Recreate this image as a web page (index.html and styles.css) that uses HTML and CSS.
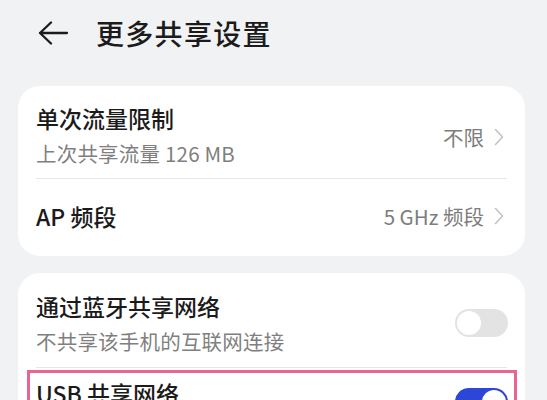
FILE: index.html
```html
<!DOCTYPE html>
<html lang="zh-CN">
<head>
<meta charset="utf-8">
<link rel="stylesheet" href="styles.css">
</head>
<body>
<div class="page">
  <header class="header">
    <svg class="back" width="32" height="24" viewBox="0 0 32 24">
      <path d="M30 12H3M14 1.5L3 12L14 22.5" fill="none" stroke="#1b1b1b" stroke-width="2.3" stroke-linecap="round" stroke-linejoin="round"/>
    </svg>
    <h1 class="title">更多共享设置</h1>
  </header>

  <section class="card">
    <div class="row row-two">
      <div class="texts">
        <div class="label">单次流量限制</div>
        <div class="sub">上次共享流量 126 MB</div>
      </div>
      <div class="value value-low">不限<svg class="chev" width="12" height="18" viewBox="0 0 12 18"><path d="M2.5 1.5L9.5 9L2.5 16.5" fill="none" stroke="#c2c2c2" stroke-width="1.6" stroke-linecap="round" stroke-linejoin="round"/></svg></div>
    </div>
    <div class="divider"></div>
    <div class="row row-one">
      <div class="label">AP 频段</div>
      <div class="value">5 GHz 频段<svg class="chev" width="12" height="18" viewBox="0 0 12 18"><path d="M2.5 1.5L9.5 9L2.5 16.5" fill="none" stroke="#c2c2c2" stroke-width="1.6" stroke-linecap="round" stroke-linejoin="round"/></svg></div>
    </div>
  </section>

  <section class="card card2">
    <div class="row row-two2">
      <div class="texts">
        <div class="label">通过蓝牙共享网络</div>
        <div class="sub">不共享该手机的互联网连接</div>
      </div>
      <div class="toggle"><span class="knob"></span></div>
    </div>
    <div class="divider"></div>
    <div class="row row-usb">
      <div class="texts">
        <div class="label">USB 共享网络</div>
      </div>
      <div class="toggle on"><span class="knob"></span></div>
      <div class="highlight"></div>
    </div>
  </section>
</div>
</body>
</html>
```

FILE: styles.css
```css
* { box-sizing: border-box; margin: 0; padding: 0; }
html, body {
  width: 547px;
  height: 400px;
  overflow: hidden;
  background: #f1f2f4;
  font-family: "Noto Sans CJK SC", "Noto Sans", sans-serif;
  color: #1b1b1b;
}
.page { padding: 0 22px 0 18px; }
.header {
  height: 70px;
  display: flex;
  align-items: center;
  padding-left: 19px;
  padding-bottom: 4px;
  gap: 27px;
}
.back { display: block; }
.title {
  font-size: 28px;
  font-weight: 500;
  line-height: 36px;
  letter-spacing: 1.3px;
  color: #1b1b1b;
}
.card {
  margin-top: 16px;
  background: #ffffff;
  border-radius: 22px;
  padding: 0 18px;
}
.card2 { margin-top: 17px; }
.row {
  display: flex;
  align-items: center;
  justify-content: space-between;
  position: relative;
}
.row-two { height: 92px; padding-top: 5px; }
.row-one { height: 77px; padding-bottom: 4px; }
.row-two2 { height: 94px; padding-top: 5px; }
.row-usb { height: 60px; align-items: flex-start; padding-top: 10px; }
.texts { display: flex; flex-direction: column; gap: 7px; }
.label {
  font-size: 23px;
  line-height: 30px;
  font-weight: 500;
  color: #1b1b1b;
}
.sub {
  font-size: 20.5px;
  line-height: 26px;
  color: #7f7f7f;
  letter-spacing: 0.2px;
}
.value {
  display: flex;
  align-items: center;
  gap: 9px;
  font-size: 20.5px;
  color: #7d7d7d;
  line-height: 26px;
}
.value-low { margin-top: 4px; }
.chev { display: block; margin-right: 2px; }
.divider {
  height: 1px;
  background: #e6e6e6;
}
.toggle {
  width: 53px;
  height: 28px;
  border-radius: 14px;
  background: #e3e3e3;
  position: relative;
  margin-right: -1px;
}
.toggle .knob {
  position: absolute;
  left: 2px;
  top: 2px;
  width: 24px;
  height: 24px;
  border-radius: 50%;
  background: #ffffff;
}
.toggle.on { background: #2c46d8; margin-top: 10px; }
.toggle.on .knob { left: auto; right: 2px; }
.highlight {
  position: absolute;
  left: -9px;
  right: -10px;
  top: 2px;
  height: 80px;
  border: 3px solid #e8668f;
  pointer-events: none;
}
```
